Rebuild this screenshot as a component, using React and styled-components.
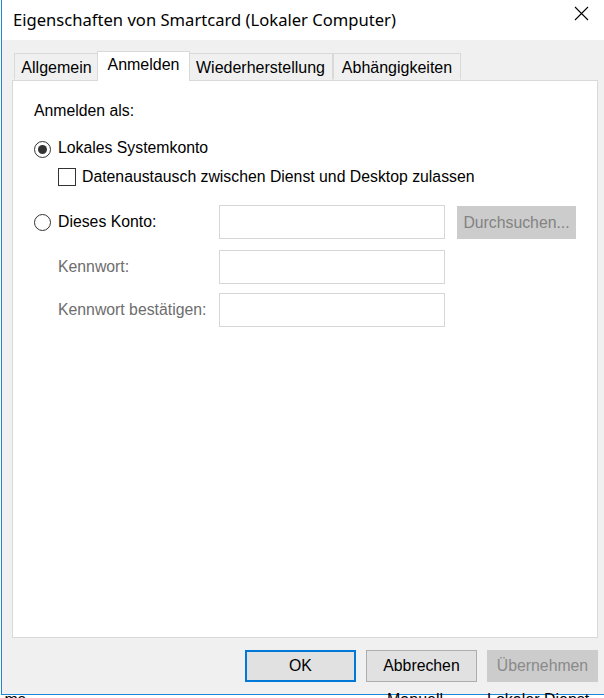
import React from 'react';
import styled, { createGlobalStyle } from 'styled-components';

const GlobalStyle = createGlobalStyle`
  html, body {
    margin: 0;
    padding: 0;
    background: #ffffff;
    overflow: hidden;
  }
  body {
    font-family: "Liberation Sans", Arial, sans-serif;
    color: #000;
  }
`;

const Screen = styled.div`
  width: 604px;
  height: 698px;
  overflow: hidden;
  background: #ffffff;
`;

const Window = styled.div`
  margin-left: 1px;
  width: 608px;
  height: 694px;
  border-left: 1px solid #1c86d8;
  border-bottom: 1px solid #1c86d8;
  display: flex;
  flex-direction: column;
`;

const TitleBar = styled.div`
  height: 40px;
  flex: none;
  background: #ffffff;
  display: flex;
  align-items: center;
  justify-content: space-between;
  padding-left: 11px;
`;

const Title = styled.div`
  font-family: "Noto Sans", "Open Sans", sans-serif;
  font-size: 16.6px;
  color: #000;
  margin-top: -1px;
`;

const CloseButton = styled.div`
  width: 58px;
  height: 40px;
  display: flex;
  align-items: flex-start;
  justify-content: center;
  padding-top: 6px;
  box-sizing: border-box;
`;

const Body = styled.div`
  flex: 1;
  background: #f0f0f0;
  padding: 11px 12px 12px 10px;
  display: flex;
  flex-direction: column;
`;

const TabRow = styled.div`
  display: flex;
  align-items: flex-end;
  padding-left: 2px;
  height: 29px;
  flex: none;
`;

const Tab = styled.div`
  box-sizing: border-box;
  width: ${(p) => (p.$active ? p.$width + 4 : p.$width)}px;
  height: ${(p) => (p.$active ? 30 : 27)}px;
  margin: ${(p) => (p.$active ? '0 -2px -1px -2px' : '0')};
  position: ${(p) => (p.$active ? 'relative' : 'static')};
  z-index: ${(p) => (p.$active ? 1 : 0)};
  background: ${(p) => (p.$active ? '#ffffff' : '#f0f0f0')};
  border: 1px solid #d9d9d9;
  border-bottom: ${(p) => (p.$active ? 'none' : '1px solid transparent')};
  padding-top: ${(p) => (p.$active ? 3 : 4)}px;
  font-size: 16px;
  line-height: 20px;
  text-align: center;
  white-space: nowrap;
  flex: none;
`;

const Panel = styled.div`
  flex: 1;
  background: #ffffff;
  border: 1px solid #d9d9d9;
  padding: 20px 0 0 21px;
  display: flex;
  flex-direction: column;
`;

const Heading = styled.div`
  font-size: 15.8px;
  line-height: 20px;
  height: 20px;
`;

const Row = styled.div`
  display: flex;
  align-items: ${(p) => p.$align || 'center'};
  margin-top: ${(p) => p.$gap}px;
  padding-left: ${(p) => p.$indent || 0}px;
  height: ${(p) => p.$height}px;
`;

const Text = styled.span`
  font-size: 15.8px;
  line-height: 20px;
  white-space: nowrap;
  color: ${(p) => (p.$disabled ? '#6d6d6d' : '#000000')};
  margin-left: ${(p) => p.$offset || 0}px;
`;

const RadioMark = styled.span`
  box-sizing: border-box;
  width: 17px;
  height: 17px;
  border-radius: 50%;
  border: 1px solid #333333;
  background: #ffffff;
  flex: none;
  display: flex;
  align-items: center;
  justify-content: center;
  margin-top: ${(p) => p.$top || 0}px;

  &::after {
    content: '';
    width: 9px;
    height: 9px;
    border-radius: 50%;
    background: ${(p) => (p.$checked ? '#333333' : 'transparent')};
  }
`;

const CheckMark = styled.span`
  box-sizing: border-box;
  width: 18px;
  height: 18px;
  border: 1px solid #333333;
  background: #ffffff;
  flex: none;
  margin-top: 1px;
`;

const LabelCell = styled.div`
  width: ${(p) => p.$width}px;
  height: 34px;
  flex: none;
  display: flex;
  align-items: center;
`;

const TextBox = styled.div`
  box-sizing: border-box;
  width: 226px;
  height: 34px;
  border: 1px solid #d6d6d6;
  background: #ffffff;
  flex: none;
`;

const BrowseButton = styled.div`
  box-sizing: border-box;
  width: 119px;
  height: 33px;
  margin-left: 12px;
  margin-top: 1px;
  background: #cccccc;
  border: 1px solid #cccccc;
  color: #838383;
  font-size: 15.8px;
  display: flex;
  align-items: center;
  justify-content: center;
  flex: none;
`;

const Footer = styled.div`
  display: flex;
  justify-content: flex-end;
  gap: 10px;
  margin-top: 12px;
  flex: none;
`;

const DialogButton = styled.div`
  box-sizing: border-box;
  width: 111px;
  height: 32px;
  display: flex;
  align-items: center;
  justify-content: center;
  font-size: 15.8px;
  background: ${(p) => (p.$disabled ? '#cccccc' : '#e1e1e1')};
  color: ${(p) => (p.$disabled ? '#8a8a8a' : '#000000')};
  border: ${(p) =>
    p.$default ? '2px solid #0078d7' : p.$disabled ? '1px solid #cccccc' : '1px solid #adadad'};
`;

/* the list of the services window behind the dialog, showing through below it */
const Backdrop = styled.div`
  height: 3px;
  font-size: 16px;
  line-height: 9px;
  white-space: nowrap;
  color: #000;
  display: flex;
`;

const BackdropCell = styled.span`
  width: ${(p) => p.$width}px;
  flex: none;
`;

function CloseIcon() {
  return (
    <svg width="15" height="15" viewBox="0 0 15 15" fill="none">
      <path d="M1 1 L14 14 M14 1 L1 14" stroke="#000" strokeWidth="1.1" />
    </svg>
  );
}

const tabs = [
  { label: 'Allgemein', width: 85 },
  { label: 'Anmelden', width: 89, active: true },
  { label: 'Wiederherstellung', width: 145 },
  { label: 'Abhängigkeiten', width: 128 },
];

export default function App() {
  return (
    <>
      <GlobalStyle />
      <Screen>
        <Window>
          <TitleBar>
            <Title>Eigenschaften von Smartcard (Lokaler Computer)</Title>
            <CloseButton>
              <CloseIcon />
            </CloseButton>
          </TitleBar>
          <Body>
            <TabRow>
              {tabs.map((t) => (
                <Tab key={t.label} $width={t.width} $active={t.active}>
                  {t.label}
                </Tab>
              ))}
            </TabRow>
            <Panel>
              <Heading>Anmelden als:</Heading>

              <Row $gap={17} $height={20} $align="flex-start">
                <RadioMark $checked $top={3} />
                <Text $offset={7}>Lokales Systemkonto</Text>
              </Row>

              <Row $gap={9} $height={20} $align="flex-start" $indent={24}>
                <CheckMark />
                <Text $offset={6}>Datenaustausch zwischen Dienst und Desktop zulassen</Text>
              </Row>

              <Row $gap={18} $height={34} $align="flex-start">
                <LabelCell $width={185}>
                  <RadioMark />
                  <Text $offset={7}>Dieses Konto:</Text>
                </LabelCell>
                <TextBox />
                <BrowseButton>Durchsuchen...</BrowseButton>
              </Row>

              <Row $gap={11} $height={34} $indent={24}>
                <LabelCell $width={161}>
                  <Text $disabled>Kennwort:</Text>
                </LabelCell>
                <TextBox />
              </Row>

              <Row $gap={9} $height={34} $indent={24}>
                <LabelCell $width={161}>
                  <Text $disabled>Kennwort bestätigen:</Text>
                </LabelCell>
                <TextBox />
              </Row>
            </Panel>
            <Footer>
              <DialogButton $default>OK</DialogButton>
              <DialogButton>Abbrechen</DialogButton>
              <DialogButton $disabled>Übernehmen</DialogButton>
            </Footer>
          </Body>
        </Window>
        <Backdrop>
          <BackdropCell $width={387}>&nbsp;ms</BackdropCell>
          <BackdropCell $width={100}>Manuell</BackdropCell>
          <BackdropCell $width={120}>Lokaler Dienst</BackdropCell>
        </Backdrop>
      </Screen>
    </>
  );
}
